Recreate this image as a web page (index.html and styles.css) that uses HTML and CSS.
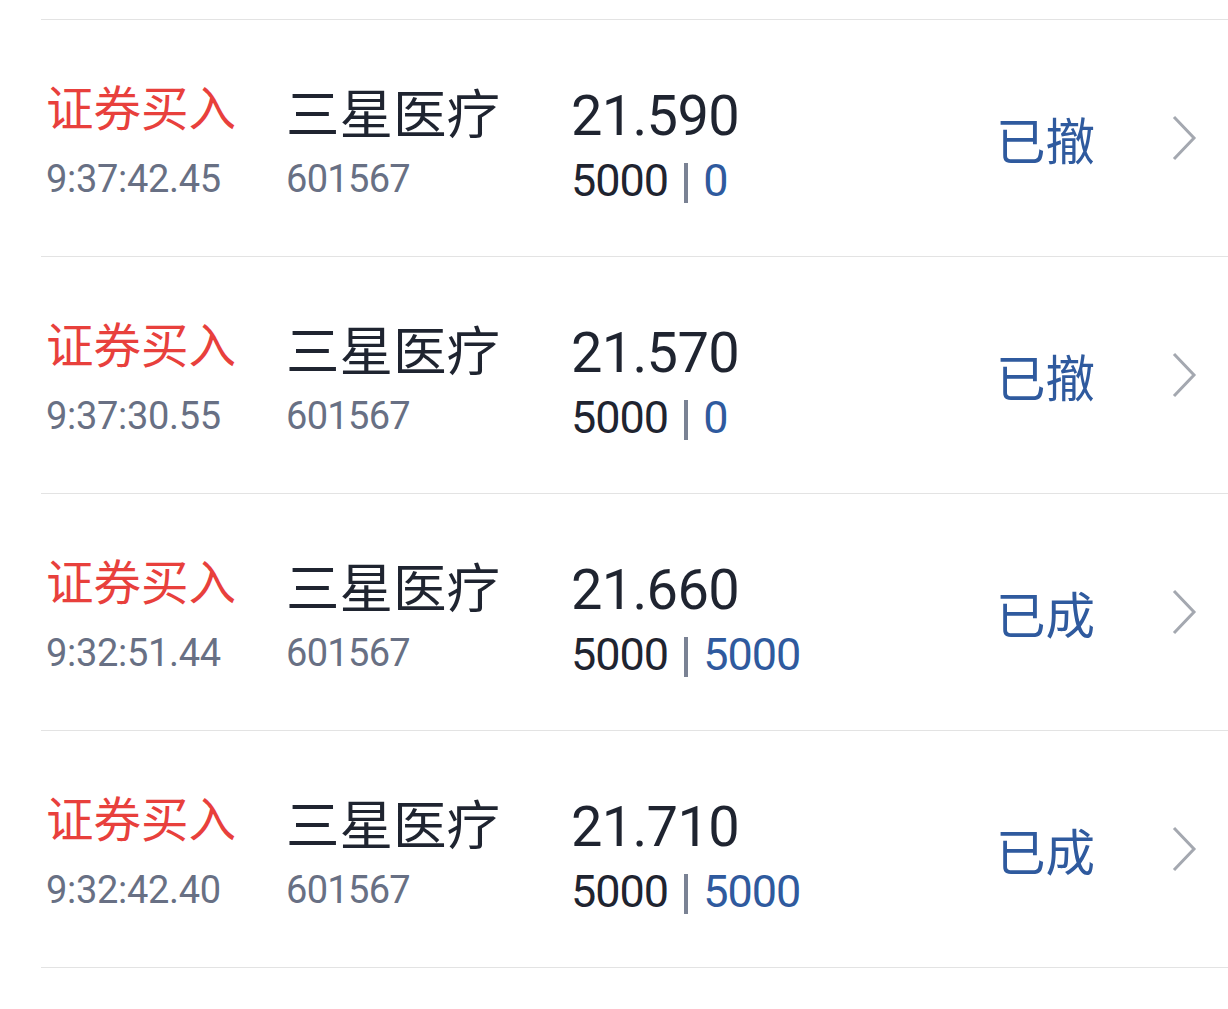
FILE: index.html
```html
<!DOCTYPE html>
<html lang="zh-CN">
<head>
  <meta charset="UTF-8">
  <title>委托记录</title>
  <link rel="stylesheet" href="styles.css">
</head>
<body>

  <div class="order-list">
    <div class="order-row">
      <div class="col-type">
        <div class="type">证券买入</div>
        <div class="time">9:37:42.45</div>
      </div>
      <div class="col-stock">
        <div class="name">三星医疗</div>
        <div class="code">601567</div>
      </div>
      <div class="col-price">
        <div class="price">21.590</div>
        <div class="qty">5000<span class="sep"></span><span class="done">0</span></div>
      </div>
      <div class="status">已撤</div>
      <svg class="chevron" width="26" height="48" viewBox="0 0 26 48"><path d="M3 3 L23 24 L3 45" fill="none" stroke="#a4a8b0" stroke-width="3"/></svg>
    </div>

    <div class="order-row">
      <div class="col-type">
        <div class="type">证券买入</div>
        <div class="time">9:37:30.55</div>
      </div>
      <div class="col-stock">
        <div class="name">三星医疗</div>
        <div class="code">601567</div>
      </div>
      <div class="col-price">
        <div class="price">21.570</div>
        <div class="qty">5000<span class="sep"></span><span class="done">0</span></div>
      </div>
      <div class="status">已撤</div>
      <svg class="chevron" width="26" height="48" viewBox="0 0 26 48"><path d="M3 3 L23 24 L3 45" fill="none" stroke="#a4a8b0" stroke-width="3"/></svg>
    </div>

    <div class="order-row">
      <div class="col-type">
        <div class="type">证券买入</div>
        <div class="time">9:32:51.44</div>
      </div>
      <div class="col-stock">
        <div class="name">三星医疗</div>
        <div class="code">601567</div>
      </div>
      <div class="col-price">
        <div class="price">21.660</div>
        <div class="qty">5000<span class="sep"></span><span class="done">5000</span></div>
      </div>
      <div class="status">已成</div>
      <svg class="chevron" width="26" height="48" viewBox="0 0 26 48"><path d="M3 3 L23 24 L3 45" fill="none" stroke="#a4a8b0" stroke-width="3"/></svg>
    </div>

    <div class="order-row">
      <div class="col-type">
        <div class="type">证券买入</div>
        <div class="time">9:32:42.40</div>
      </div>
      <div class="col-stock">
        <div class="name">三星医疗</div>
        <div class="code">601567</div>
      </div>
      <div class="col-price">
        <div class="price">21.710</div>
        <div class="qty">5000<span class="sep"></span><span class="done">5000</span></div>
      </div>
      <div class="status">已成</div>
      <svg class="chevron" width="26" height="48" viewBox="0 0 26 48"><path d="M3 3 L23 24 L3 45" fill="none" stroke="#a4a8b0" stroke-width="3"/></svg>
    </div>
  </div>

</body>
</html>
```

FILE: styles.css
```css
body {
  margin: 0;
  background: #fff;
  font-family: 'Roboto', 'Noto Sans CJK SC', sans-serif;
  color: #1f2430;
}

.order-list {
  margin: 19px 0 0 41px;
  border-top: 1px solid #e3e3e3;
}

.order-row {
  height: 236px;
  border-bottom: 1px solid #e3e3e3;
  display: flex;
  align-items: center;
  padding: 0 31px 0 5px;
}

.col-type {
  width: 240px;
}

.type {
  font-size: 47.5px;
  line-height: 82px;
  color: #e8403c;
  font-family: 'Noto Sans CJK SC', sans-serif;
}

.time {
  font-size: 38px;
  line-height: 64px;
  letter-spacing: -0.3px;
  color: #687084;
}

.col-stock {
  width: 285px;
}

.name {
  font-size: 53.5px;
  line-height: 82px;
  font-family: 'Noto Sans CJK SC', sans-serif;
}

.code {
  font-size: 38px;
  line-height: 55px;
  letter-spacing: -0.7px;
  color: #687084;
}

.col-price {
  flex: 1;
}

.price {
  font-size: 56px;
  line-height: 84px;
  letter-spacing: -0.7px;
}

.qty {
  font-size: 45px;
  line-height: 45px;
  letter-spacing: -1px;
}

.sep {
  display: inline-block;
  width: 4px;
  height: 40px;
  background: #7a8294;
  margin: 0 15px 0 16px;
  vertical-align: -7px;
}

.done {
  color: #2f5a9e;
}

.status {
  width: 175px;
  font-size: 49.5px;
  color: #2f5a9e;
  font-family: 'Noto Sans CJK SC', sans-serif;
}

.chevron {
  display: block;
}
```
